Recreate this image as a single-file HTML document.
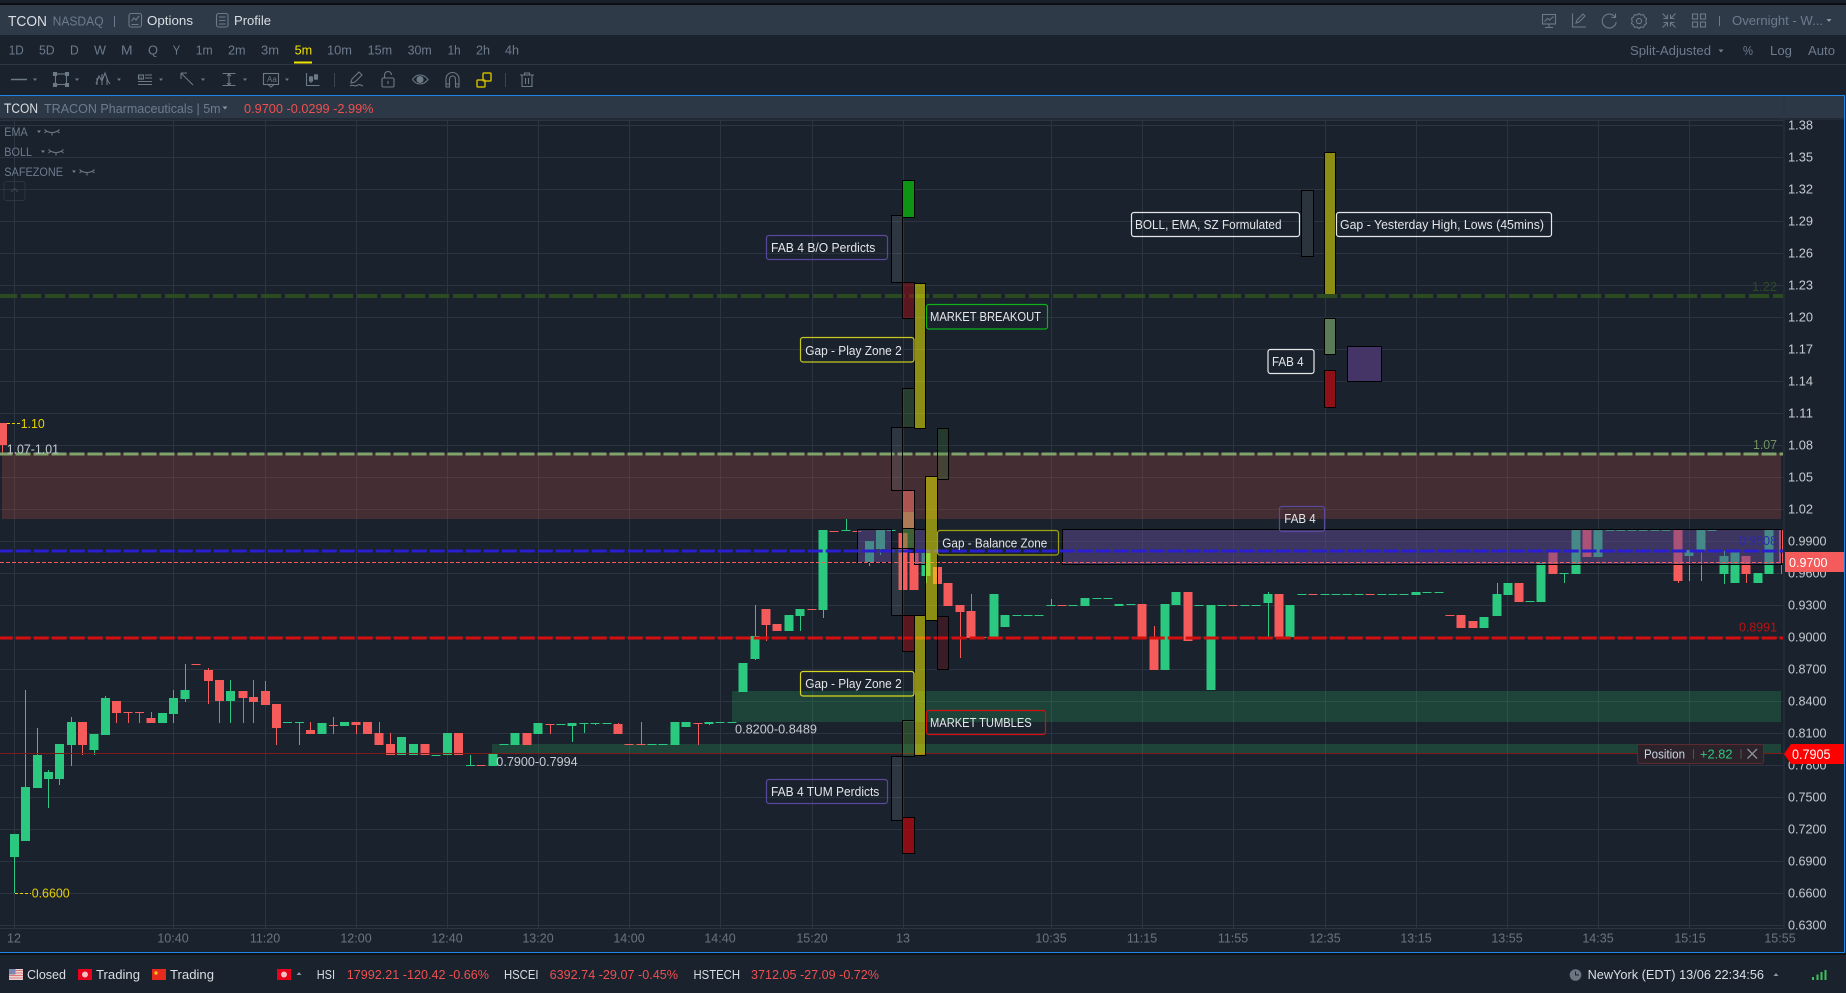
<!DOCTYPE html>
<html><head><meta charset="utf-8"><title>TCON</title>
<style>
html,body{margin:0;padding:0;background:#1a222d;width:1846px;height:993px;overflow:hidden}
svg{display:block}
text{font-family:"Liberation Sans","Noto Sans CJK SC",sans-serif;font-size:12.5px;fill:#c9ced4}
.m{fill:#6c7b8d}.w{fill:#d9dee3}.a{fill:#6a7480}.p{fill:#c6cbd1}.r{fill:#ef5050}.l{fill:#e4e6e9}
.y{fill:#e6d000}
.ic{fill:none;stroke:#6c7986;stroke-width:1.1}
.lb{fill:none;stroke-width:1.2}
.ov{stroke:#000;stroke-width:1}
</style></head><body>
<svg xmlns="http://www.w3.org/2000/svg" width="1846" height="993" viewBox="0 0 1846 993">
<rect width="1846" height="993" fill="#1a222d"/>
<rect width="1846" height="3" fill="#1a2029"/><rect y="3" width="1846" height="2" fill="#0b0e12"/>
<rect y="5" width="1846" height="30" fill="#2f3a49"/>
<rect y="64" width="1846" height="1" fill="#2e3843"/>
<rect y="96" width="1844" height="22" fill="#2d3846"/>
<rect y="118" width="1844" height="2" fill="#222a35"/>

<!-- top bar -->
<text x="8" y="26" style="font-size:15px" fill="#e8ebee" class="w" textLength="39" lengthAdjust="spacingAndGlyphs">TCON</text>
<text x="52.6" y="25.5" class="m" style="font-size:13px" textLength="51" lengthAdjust="spacingAndGlyphs">NASDAQ</text>
<rect x="114" y="16" width="1" height="11" fill="#6c7b8d"/>
<g class="ic"><rect x="129" y="13.5" width="12.5" height="13.5" rx="2"/><path d="M131.5 21l2.5-3 2 2 3-4M131.5 24.5h7"/></g>
<text x="147" y="25" class="w" style="font-size:13px" textLength="46" lengthAdjust="spacingAndGlyphs">Options</text>
<g class="ic"><rect x="216.500" y="13.500" width="11.500" height="13.500" rx="2"/><path d="M219 17h6.500M219 20.500h6.500M219 24h6.500"/></g>
<text x="234" y="25" class="w" style="font-size:13px" textLength="37" lengthAdjust="spacingAndGlyphs">Profile</text>

<g class="ic">
<rect x="1542.500" y="14.500" width="13" height="9.500"/><path d="M1549 24v3M1545 27.500h8M1544.500 21.500l3-3 2 1.500 4-3.500"/>
<path d="M1572.500 13.500v13.500h13.500M1576 23l1-3 6-6 2 2-6 6z"/>
<path d="M1615 17a7 7 0 1 0 1.200 5M1615.500 13.500v4h-4" />
<circle cx="1639" cy="21" r="2.600"/><path d="M1639 13.500l2 1.500 2.500-.3 1 2.300 2 1.500-.7 2.500.7 2.500-2 1.500-1 2.300-2.500-.3-2 1.500-2-1.500-2.500.3-1-2.300-2-1.500.7-2.500-.7-2.500 2-1.500 1-2.300 2.500.3z"/>
<path d="M1662.500 13.500l5 5M1667.500 14.500v4h-4M1675.500 13.500l-5 5M1670.500 14.500v4h4M1662.500 27.500l5-5M1667.500 26.500v-4h-4M1675.500 27.500l-5-5M1670.500 26.500v-4h4"/>
<rect x="1692.500" y="14" width="5" height="5"/><rect x="1700.500" y="14" width="5" height="5"/><rect x="1692.500" y="22" width="5" height="5"/><rect x="1700.500" y="22" width="5" height="5"/>
</g>
<rect x="1719" y="16" width="1" height="10" fill="#6c7b8d"/>
<text x="1732" y="25" class="m" textLength="91" lengthAdjust="spacingAndGlyphs">Overnight - W...</text>
<path d="M1826.500 19h5l-2.500 3z" fill="#8a96a3"/>

<!-- timeframe -->
<g class="m">
<text class="m" x="8.700" y="54.500" textLength="15" lengthAdjust="spacingAndGlyphs">1D</text>
<text class="m" x="39" y="54.500" textLength="15.600" lengthAdjust="spacingAndGlyphs">5D</text>
<text class="m" x="70" y="54.500" textLength="8.700" lengthAdjust="spacingAndGlyphs">D</text>
<text class="m" x="94" y="54.500" textLength="12" lengthAdjust="spacingAndGlyphs">W</text>
<text class="m" x="121" y="54.500" textLength="11.500" lengthAdjust="spacingAndGlyphs">M</text>
<text class="m" x="148" y="54.500" textLength="10" lengthAdjust="spacingAndGlyphs">Q</text>
<text class="m" x="172.800" y="54.500" textLength="7.500" lengthAdjust="spacingAndGlyphs">Y</text>
<text class="m" x="195.700" y="54.500" textLength="17" lengthAdjust="spacingAndGlyphs">1m</text>
<text class="m" x="228" y="54.500" textLength="17.600" lengthAdjust="spacingAndGlyphs">2m</text>
<text class="m" x="261" y="54.500" textLength="18" lengthAdjust="spacingAndGlyphs">3m</text>
<text style="fill:#f2e400" x="294.600" y="54.500" textLength="17.500" lengthAdjust="spacingAndGlyphs">5m</text>
<text class="m" x="327" y="54.500" textLength="25" lengthAdjust="spacingAndGlyphs">10m</text>
<text class="m" x="367.600" y="54.500" textLength="24.500" lengthAdjust="spacingAndGlyphs">15m</text>
<text class="m" x="407.600" y="54.500" textLength="24.200" lengthAdjust="spacingAndGlyphs">30m</text>
<text class="m" x="447.600" y="54.500" textLength="13" lengthAdjust="spacingAndGlyphs">1h</text>
<text class="m" x="476" y="54.500" textLength="14" lengthAdjust="spacingAndGlyphs">2h</text>
<text class="m" x="505" y="54.500" textLength="14" lengthAdjust="spacingAndGlyphs">4h</text>
</g>
<rect x="294" y="61.500" width="18" height="2" fill="#f2e400"/>
<text class="m" x="1630" y="55" textLength="81" lengthAdjust="spacingAndGlyphs">Split-Adjusted</text>
<path d="M1718.500 49.500h5l-2.500 3z" fill="#76838f"/>
<text class="m" x="1743" y="55" textLength="10" lengthAdjust="spacingAndGlyphs">%</text>
<text class="m" x="1770" y="55" textLength="22" lengthAdjust="spacingAndGlyphs">Log</text>
<text class="m" x="1808" y="55" textLength="27" lengthAdjust="spacingAndGlyphs">Auto</text>

<!-- drawing toolbar -->
<g fill="#6c7986">
<path d="M33 78.500h4l-2 2.500zM75 78.500h4l-2 2.500zM117 78.500h4l-2 2.500zM159 78.500h4l-2 2.500zM201 78.500h4l-2 2.500zM243 78.500h4l-2 2.500zM285 78.500h4l-2 2.500z"/>
<rect x="334" y="73" width="1" height="14" fill="#3a4552"/><rect x="505" y="73" width="1" height="14" fill="#3a4552"/>
</g>
<g class="ic">
<path d="M11 79.500h16" stroke-width="1.500"/>
<rect x="55.500" y="74" width="11" height="10.500"/><path d="M53.500 72.500h3v3h-3zM65.500 72.500h3v3h-3zM53.500 83.500h3v3h-3zM65.500 83.500h3v3h-3z" fill="#6c7986"/>
<path d="M96 84l3-8 3 5 3-8 3 8 2 3M97 78v7M102 74v11M107 78v7" />
<rect x="138.500" y="75" width="5" height="4"/><path d="M145 75h7M145 78h7M138 81.500h14M138 84.500h14" />
<path d="M181 73l12 12M181 73h6M181 73v6"/>
<path d="M222.500 73.500h13M222.500 85.500h13M229 74v11M227 76l2-2 2 2M227 83l2 2 2-2"/>
<rect x="263.500" y="73.500" width="15" height="11"/><path d="M268 84.500l3 2.500 3-2.500"/>
<path d="M306.500 73v12.500h13M311 76v7M316 74v6"/><rect x="309.500" y="77" width="3" height="4" fill="#6c7986"/><rect x="314.500" y="75" width="3" height="4" fill="#6c7986"/>
<path d="M351 82l1-3 7-7 3 3-7 7-4 1zM350 86c3-2 5 1 7-.5s4-.5 6 .5"/>
<rect x="382" y="78" width="12" height="9" rx="1.500"/><path d="M384.500 78v-3a3.500 3.500 0 0 1 7 0M388 81v3"/>
<path d="M412.500 79.500c4-6 11-6 15.500 0c-4.500 6-11.500 6-15.500 0z"/><circle cx="420" cy="79.500" r="3" fill="#6c7986"/>
<path d="M446 87v-8a6.500 6.500 0 0 1 13 0v8h-3.500v-8a3 3 0 0 0-6 0v8zM446 84h3.500M456 84h3"/>
<path d="M520 75h14M524.500 75v-2h5v2M522 75v11.500h10V75M525.500 78v6M528.500 78v6"/>
</g>
<text x="267" y="82" style="font-size:8px;fill:#6c7986">Aa</text>
<text x="139" y="78.500" style="font-size:4px;fill:#6c7986">G</text>
<g fill="none" stroke="#c9b800" stroke-width="1.500"><rect x="483" y="73" width="8" height="8" rx="1"/><rect x="477" y="80" width="8" height="7" rx="1"/></g>

<!-- legend -->
<text x="4" y="113" class="w" style="font-size:13.500px" textLength="34" lengthAdjust="spacingAndGlyphs">TCON</text>
<text x="44" y="113" class="m" style="font-size:13px" textLength="176.600" lengthAdjust="spacingAndGlyphs">TRACON Pharmaceuticals | 5m</text>
<path d="M222.500 106.500h5l-2.500 3z" fill="#8a96a3"/>
<text x="244" y="113" class="r" style="font-size:13px" textLength="129.500" lengthAdjust="spacingAndGlyphs">0.9700 -0.0299 -2.99%</text>

<!-- grid -->
<path stroke="#2b3440" stroke-width="1" fill="none" shape-rendering="crispEdges" d="M0 120.500H1783M0 125.500H1783M0 157.500H1783M0 189.500H1783M0 221.500H1783M0 253.500H1783M0 285.500H1783M0 317.500H1783M0 349.500H1783M0 381.500H1783M0 413.500H1783M0 445.500H1783M0 477.500H1783M0 509.500H1783M0 541.500H1783M0 573.500H1783M0 605.500H1783M0 637.500H1783M0 669.500H1783M0 701.500H1783M0 733.500H1783M0 765.500H1783M0 797.500H1783M0 829.500H1783M0 861.500H1783M0 893.500H1783M0 925.500H1783M0 928.500H1783
M14.500 120V928M173.500 120V928M265.500 120V928M356.500 120V928M447.500 120V928M538.500 120V928M629.500 120V928M720.500 120V928M812.500 120V928M903.500 120V928M1051.500 120V928M1142.500 120V928M1233.500 120V928M1325.500 120V928M1416.500 120V928M1507.500 120V928M1598.500 120V928M1689.500 120V928"/>
<rect x="1783.500" y="96" width="1" height="833" fill="#2b3440"/>

<!-- legend rows over grid -->
<text x="4.300" y="136" class="m" style="font-size:12px" textLength="23.400" lengthAdjust="spacingAndGlyphs">EMA</text>
<path d="M37 130.500h4l-2 2.500z" fill="#76838f"/>
<path class="ic" d="M44.500 129.500c4 4 11 4 15 0M47 131l-2.500 2M52 133v2.500M57 131l2.500 2" />
<text x="4.300" y="156" class="m" style="font-size:12px" textLength="27.700" lengthAdjust="spacingAndGlyphs">BOLL</text>
<path d="M41 150.500h4l-2 2.500z" fill="#76838f"/>
<path class="ic" d="M48.500 149.500c4 4 11 4 15 0M51 151l-2.500 2M56 153v2.500M61 151l2.500 2" />
<text x="4.300" y="176" class="m" style="font-size:12px" textLength="58.700" lengthAdjust="spacingAndGlyphs">SAFEZONE</text>
<path d="M72 170.500h4l-2 2.500z" fill="#76838f"/>
<path class="ic" d="M79.500 169.500c4 4 11 4 15 0M82 171l-2.500 2M87 173v2.500M92 171l2.500 2" />
<rect x="4" y="181.500" width="21" height="19" rx="2.500" fill="none" stroke="#2c3540"/>
<path d="M11 192l3.500-3.500 3.500 3.500" fill="none" stroke="#3c4753"/>

<!-- zones -->
<rect x="2" y="453" width="1779" height="66" fill="rgb(190,80,70)" fill-opacity=".26"/>
<rect x="732" y="691" width="1049" height="31" fill="rgb(45,170,95)" fill-opacity=".25"/>
<rect x="492" y="744" width="1289" height="9" fill="rgb(45,170,95)" fill-opacity=".25"/>

<!-- candles -->
<g shape-rendering="crispEdges" fill="none">
<path stroke="#2ac97f" stroke-width="1" d="M14.500 857V893M25.500 690V787M37.500 728V755M48.500 770V808M59.500 779V785M71.500 717V766M94.500 750V755M105.500 696V698M173.500 690V723M185.500 664V702M230.500 680V723M299.500 722V745M470.500 755V765M572.500 726V742M584.500 723V733M595.500 723V725M709.500 724V725M755.500 605V660M800.500 616V631M823.500 610V618M846.500 519V530M869.500 562V566M880.500 549V555M926.500 576V583M1051.500 599V605M1268.500 592V637M1497.500 583V616M1564.500 573V583M1689.500 556V581M1701.500 550V581M1724.500 551V584"/>
<path stroke="#f55b5b" stroke-width="1" d="M82.500 745V755M116.500 713V723M128.500 713V723M139.500 713V723M151.500 712V718M208.500 668V704M219.500 701V723M243.500 698V723M253.500 680V723M265.500 681V691M276.500 728V745M310.500 722V730M333.500 717V734M356.500 725V734M379.500 722V733M390.500 733V744M550.500 725V734M618.500 723V724M641.500 722V744M698.500 724V745M766.500 625V641M960.500 612V658M971.500 594V611M1154.500 626V638M1678.500 581V583M1746.500 574V583M1781.500 563V574M2.500 445V455"/>
<path stroke="#2ac97f" stroke-width="9" d="M14.500 834V857M25.500 787V841M37.500 755V788M48.500 772V779M59.500 744V779M71.500 722V745M94 734V750M105.500 698V735M162.500 713V723M173.500 698V714M185 690V699M230.500 691V701M322 723V734M344.500 722V726M401.500 737V755M413.500 744V755M447.500 733V755M493 754V766M515 733V745M538 723V734M572 723V726M675 722V745M686 722V727M709 722V724M743 663V692M755 636V659M789 615V631M800 609V616M823 530V610M869.500 541V562M880.500 530V549M926 553V576M994 594V637M1005 615V627M1085 598V606M1119 604V606M1165 604V670M1176 592V605M1211 605V690M1268 594V603M1290 605V637M1416 592V595M1484 617V628M1497 594V616M1508 583V595M1541 563V602M1576 530V574M1598 530V557M1689 550V556M1701 530V550M1724 556V574M1735 552V583M1758 573V583M1769 530V574
M287.500 722V723M299.500 722V723M436 755V756M470.500 765V766M504 744V745M561 724V725M584 723V724M595 723V724M607 723V724M652 744V745M663 744V745M720 722V723M732 722V723M846 530V531M891 530V531M982 637V638M1017 615V616M1028 615V616M1039 615V616M1051 605V606M1073 605V606M1097 598V599M1108 598V599M1131 604V605M1199 605V606M1222 605V606M1245 605V606M1256 605V606M1302 594V595M1325 594V595M1336 594V595M1347 594V595M1359 594V595M1382 594V595M1393 594V595M1404 594V595M1427 592V593M1439 592V593M1530 601V602M1564 573V574M1610 530V531M1621 530V531M1632 530V531M1643 530V531M1655 530V531M1666 530V531M1712 530V531"/>
<path stroke="#f55b5b" stroke-width="9" d="M82.500 722V745M116.500 701V713M151 718V723M208.500 670V681M219.500 680V701M243 691V698M253.500 697V702M265.500 691V705M276.500 704V728M310.500 730V734M356 722V725M367.500 722V734M379 733V745M390.500 744V755M425 744V755M458.500 733V755M527 733V745M618 724V734M766 609V625M777 624V631M903 533V590M914 553V590M937.500 567V584M948 583V606M960 605V612M971 611V638M1142 604V638M1154 638V670M1188 592V641M1279 594V637M1461 615V628M1473 621V628M1519 583V602M1553 552V574M1587 530V557M1678 530V581M1746 556V574
M128 712V713M139.500 712V713M196 664V665M333.500 725V726M481 765V766M550 724V725M629 744V745M641 744V745M698 723V724M812 609V610M834 531V532M857 531V532M1062 605V606M1233 605V606M1313 594V595M1370 594V595M1450 615V616"/>
<path stroke="#f55b5b" stroke-width="7" d="M3.500 423V445"/>
<path stroke="#f55b5b" stroke-width="4" d="M1781 530V563"/>
</g>

<!-- purple boxes -->
<g class="ov" fill="rgb(95,73,148)" fill-opacity=".5">
<rect x="857.500" y="529.500" width="34" height="33"/>
<rect x="914.500" y="529.500" width="11" height="35"/>
<rect x="1062.500" y="529.500" width="719" height="35"/>
</g>

<!-- dashed lines -->
<g fill="none" shape-rendering="crispEdges">
<path d="M-3 296H1783" stroke="#2b4a1f" stroke-width="4" stroke-dasharray="20 4"/>
<path d="M-2.300 454H1783" stroke="#7fa36a" stroke-width="3" stroke-dasharray="15 3"/>
<path d="M0 562.500H1783" stroke="#f55b5b" stroke-width="1" stroke-dasharray="4 2"/>
<path d="M0 753.500H1783" stroke="#7e1a1a" stroke-width="1"/>
</g>
<g fill="none">
<path d="M-2.300 551H1783" stroke="#2a1fd0" stroke-width="3" stroke-dasharray="15 3"/>
<path d="M-2.300 638H1783" stroke="#d40f0f" stroke-width="3" stroke-dasharray="15 3"/>
</g>

<!-- vertical overlays -->
<g class="ov">
<rect x="902.500" y="180.500" width="12" height="37" fill="#0d9414"/>
<rect x="891.500" y="215.500" width="11" height="67" fill="rgb(130,138,144)" fill-opacity=".2"/>
<rect x="902.500" y="282.500" width="12" height="36" fill="rgb(190,5,10)" fill-opacity=".4"/>
<rect x="902.500" y="388.500" width="12" height="39" fill="rgb(70,130,50)" fill-opacity=".3"/>
<rect x="891.500" y="427.500" width="11" height="63" fill="rgb(130,138,144)" fill-opacity=".2"/>
<rect x="891.500" y="548.500" width="11" height="67" fill="rgb(130,138,144)" fill-opacity=".2"/>
<rect x="902.500" y="490.500" width="12" height="38" fill="rgb(240,110,100)" fill-opacity=".6"/>
<rect x="903" y="512" width="11" height="16" fill="#ae7a55" stroke="none"/>
<rect x="902.500" y="528.500" width="12" height="20" fill="rgb(90,150,60)" fill-opacity=".55"/>
<rect x="902.500" y="615.500" width="12" height="36" fill="rgb(190,5,10)" fill-opacity=".4"/>
<rect x="902.500" y="720.500" width="12" height="36" fill="rgb(70,130,50)" fill-opacity=".4"/>
<rect x="891.500" y="756.500" width="11" height="64" fill="rgb(130,138,144)" fill-opacity=".2"/>
<rect x="902.500" y="817.500" width="12" height="36" fill="rgb(190,5,10)" fill-opacity=".7"/>
<rect x="914.500" y="283.500" width="11" height="145" fill="rgb(234,229,0)" fill-opacity=".55"/>
<rect x="914.500" y="615.500" width="11" height="140" fill="rgb(234,229,0)" fill-opacity=".55"/>
<rect x="925.500" y="476.500" width="12" height="144" fill="rgb(234,229,0)" fill-opacity=".55"/>
<rect x="937.500" y="428.500" width="11" height="51" fill="rgb(70,130,50)" fill-opacity=".25"/>
<rect x="937.500" y="616.500" width="11" height="53" fill="rgb(190,5,10)" fill-opacity=".2"/>
<rect x="1301.500" y="190.500" width="12" height="66" fill="#2b333d"/>
<rect x="1324.500" y="152.500" width="11" height="144" fill="#8c8d14"/>
<rect x="1324.500" y="318.500" width="11" height="36" fill="#5b7a58"/>
<rect x="1324.500" y="370.500" width="11" height="37" fill="#8f1117"/>
<rect x="1347.500" y="346.500" width="34" height="35" fill="#443566"/>
</g>
<path d="M1324 296h12" stroke="#2b4a1f" stroke-width="4" fill="none"/>

<!-- annotation labels -->
<g class="lb">
<rect x="1131.500" y="212.500" width="168" height="24" rx="2.500" stroke="#e8e8e8"/>
<rect x="1336.500" y="212.500" width="215" height="24" rx="2.500" stroke="#e8e8e8"/>
<rect x="1268" y="349.500" width="46" height="24" rx="2.500" stroke="#e8e8e8"/>
<rect x="766.500" y="235.500" width="121" height="24" rx="2.500" stroke="#59489a"/>
<rect x="926.500" y="304.500" width="121" height="24.500" rx="2.500" stroke="#0fb01a"/>
<rect x="800.500" y="337.500" width="113.500" height="24.500" rx="2.500" stroke="#c8c81e"/>
<rect x="937.500" y="530.500" width="121" height="24.500" rx="2.500" stroke="#a0a012"/>
<rect x="800.500" y="671.500" width="113.500" height="24.500" rx="2.500" stroke="#d8d820"/>
<rect x="926.500" y="710.500" width="119" height="24" rx="2.500" stroke="#d01010"/>
<rect x="766.500" y="779.500" width="121" height="24" rx="2.500" stroke="#59489a"/>
<rect x="1279.500" y="506.500" width="45" height="25" rx="2.500" stroke="#59489a"/>
</g>
<g>
<text class="l" x="1135" y="229" textLength="146.500" lengthAdjust="spacingAndGlyphs">BOLL, EMA, SZ Formulated</text>
<text class="l" x="1340" y="229" textLength="204" lengthAdjust="spacingAndGlyphs">Gap - Yesterday High, Lows (45mins)</text>
<text class="l" x="1272" y="366" textLength="31.500" lengthAdjust="spacingAndGlyphs">FAB 4</text>
<text class="l" x="771" y="252" textLength="104.300" lengthAdjust="spacingAndGlyphs">FAB 4 B/O Perdicts</text>
<text class="l" x="930" y="321" textLength="111" lengthAdjust="spacingAndGlyphs">MARKET BREAKOUT</text>
<text class="l" x="805.300" y="355" textLength="96.400" lengthAdjust="spacingAndGlyphs">Gap - Play Zone 2</text>
<text class="l" x="942.300" y="547.500" textLength="105" lengthAdjust="spacingAndGlyphs">Gap - Balance Zone</text>
<text class="l" x="805.300" y="688" textLength="96.400" lengthAdjust="spacingAndGlyphs">Gap - Play Zone 2</text>
<text class="l" x="930" y="727" textLength="101.700" lengthAdjust="spacingAndGlyphs">MARKET TUMBLES</text>
<text class="l" x="771" y="796" textLength="108.300" lengthAdjust="spacingAndGlyphs">FAB 4 TUM Perdicts</text>
<text class="l" x="1284.300" y="523" textLength="31.400" lengthAdjust="spacingAndGlyphs">FAB 4</text>
<text class="p" x="735" y="733.500" textLength="82" lengthAdjust="spacingAndGlyphs">0.8200-0.8489</text>
<text class="p" x="496.300" y="766" textLength="81.400" lengthAdjust="spacingAndGlyphs">0.7900-0.7994</text>
<text class="p" x="6.700" y="453.500" textLength="52.300" lengthAdjust="spacingAndGlyphs">1.07-1.01</text>
<text class="y" x="20.700" y="428" textLength="24" lengthAdjust="spacingAndGlyphs">1.10</text>
<text class="y" x="31.700" y="897.500" textLength="38" lengthAdjust="spacingAndGlyphs">0.6600</text>
</g>
<path d="M7 423.500h13M15 893.500h16" stroke="#e6d000" stroke-width="1" stroke-dasharray="3 2" fill="none"/>
<text x="1752" y="291" style="fill:#2f4a26" textLength="25" lengthAdjust="spacingAndGlyphs">1.22</text>
<text x="1753" y="449" style="fill:#6f9160" textLength="24" lengthAdjust="spacingAndGlyphs">1.07</text>
<text x="1739" y="545" style="fill:#2f2aa8" textLength="38" lengthAdjust="spacingAndGlyphs">0.9808</text>
<text x="1739" y="631.500" style="fill:#b51414" textLength="38" lengthAdjust="spacingAndGlyphs">0.8991</text>

<!-- price axis -->
<g>
<text class="p" x="1788" y="129.500" textLength="25" lengthAdjust="spacingAndGlyphs">1.38</text>
<text class="p" x="1788" y="161.500" textLength="25" lengthAdjust="spacingAndGlyphs">1.35</text>
<text class="p" x="1788" y="193.500" textLength="25" lengthAdjust="spacingAndGlyphs">1.32</text>
<text class="p" x="1788" y="225.500" textLength="25" lengthAdjust="spacingAndGlyphs">1.29</text>
<text class="p" x="1788" y="257.500" textLength="25" lengthAdjust="spacingAndGlyphs">1.26</text>
<text class="p" x="1788" y="289.500" textLength="25" lengthAdjust="spacingAndGlyphs">1.23</text>
<text class="p" x="1788" y="321.500" textLength="25" lengthAdjust="spacingAndGlyphs">1.20</text>
<text class="p" x="1788" y="353.500" textLength="25" lengthAdjust="spacingAndGlyphs">1.17</text>
<text class="p" x="1788" y="385.500" textLength="25" lengthAdjust="spacingAndGlyphs">1.14</text>
<text class="p" x="1788" y="417.500" textLength="25" lengthAdjust="spacingAndGlyphs">1.11</text>
<text class="p" x="1788" y="449.500" textLength="25" lengthAdjust="spacingAndGlyphs">1.08</text>
<text class="p" x="1788" y="481.500" textLength="25" lengthAdjust="spacingAndGlyphs">1.05</text>
<text class="p" x="1788" y="513.500" textLength="25" lengthAdjust="spacingAndGlyphs">1.02</text>
<text class="p" x="1788" y="545.500" textLength="38.500" lengthAdjust="spacingAndGlyphs">0.9900</text>
<text class="p" x="1788" y="577.500" textLength="38.500" lengthAdjust="spacingAndGlyphs">0.9600</text>
<text class="p" x="1788" y="609.500" textLength="38.500" lengthAdjust="spacingAndGlyphs">0.9300</text>
<text class="p" x="1788" y="641.500" textLength="38.500" lengthAdjust="spacingAndGlyphs">0.9000</text>
<text class="p" x="1788" y="673.500" textLength="38.500" lengthAdjust="spacingAndGlyphs">0.8700</text>
<text class="p" x="1788" y="705.500" textLength="38.500" lengthAdjust="spacingAndGlyphs">0.8400</text>
<text class="p" x="1788" y="737.500" textLength="38.500" lengthAdjust="spacingAndGlyphs">0.8100</text>
<text class="p" x="1788" y="769.500" textLength="38.500" lengthAdjust="spacingAndGlyphs">0.7800</text>
<text class="p" x="1788" y="801.500" textLength="38.500" lengthAdjust="spacingAndGlyphs">0.7500</text>
<text class="p" x="1788" y="833.500" textLength="38.500" lengthAdjust="spacingAndGlyphs">0.7200</text>
<text class="p" x="1788" y="865.500" textLength="38.500" lengthAdjust="spacingAndGlyphs">0.6900</text>
<text class="p" x="1788" y="897.500" textLength="38.500" lengthAdjust="spacingAndGlyphs">0.6600</text>
<text class="p" x="1788" y="929.500" textLength="38.500" lengthAdjust="spacingAndGlyphs">0.6300</text>
</g>
<rect x="1785" y="552" width="59" height="20" fill="#f55b5b"/>
<text x="1789" y="567" style="fill:#fff" textLength="38.500" lengthAdjust="spacingAndGlyphs">0.9700</text>
<path d="M1784 754l7-10h53v20h-53z" fill="#ff0000"/>
<text x="1792" y="759" style="fill:#fff;font-size:13.500px" textLength="38.500" lengthAdjust="spacingAndGlyphs">0.7905</text>
<rect x="1637.500" y="744.500" width="126" height="19" rx="2" fill="#2b222a" stroke="#5c2a30"/>
<text x="1644" y="758.500" style="fill:#c9d6e2" textLength="41" lengthAdjust="spacingAndGlyphs">Position</text>
<rect x="1693" y="749" width="1" height="10" fill="#55505a"/>
<text x="1700" y="758.500" style="fill:#2ac97f" textLength="32.600" lengthAdjust="spacingAndGlyphs">+2.82</text>
<rect x="1740.500" y="749" width="1" height="10" fill="#55505a"/>
<path d="M1747.500 749l9.500 9.500M1757 749l-9.500 9.500" stroke="#8a939c" stroke-width="1.300" fill="none"/>

<!-- time axis -->
<g text-anchor="middle">
<text class="a" x="14" y="942.500" text-anchor="middle">12</text>
<text class="a" x="173" y="942.500" text-anchor="middle">10:40</text>
<text class="a" x="265" y="942.500" text-anchor="middle">11:20</text>
<text class="a" x="356" y="942.500" text-anchor="middle">12:00</text>
<text class="a" x="447" y="942.500" text-anchor="middle">12:40</text>
<text class="a" x="538" y="942.500" text-anchor="middle">13:20</text>
<text class="a" x="629" y="942.500" text-anchor="middle">14:00</text>
<text class="a" x="720" y="942.500" text-anchor="middle">14:40</text>
<text class="a" x="812" y="942.500" text-anchor="middle">15:20</text>
<text class="a" x="903" y="942.500" text-anchor="middle">13</text>
<text class="a" x="1051" y="942.500" text-anchor="middle">10:35</text>
<text class="a" x="1142" y="942.500" text-anchor="middle">11:15</text>
<text class="a" x="1233" y="942.500" text-anchor="middle">11:55</text>
<text class="a" x="1325" y="942.500" text-anchor="middle">12:35</text>
<text class="a" x="1416" y="942.500" text-anchor="middle">13:15</text>
<text class="a" x="1507" y="942.500" text-anchor="middle">13:55</text>
<text class="a" x="1598" y="942.500" text-anchor="middle">14:35</text>
<text class="a" x="1690" y="942.500" text-anchor="middle">15:15</text>
<text class="a" x="1780" y="942.500" text-anchor="middle">15:55</text>
</g>

<!-- blue frame -->
<path d="M0 95.500H1844.500V952.500H0" fill="none" stroke="#1e86e8" stroke-width="1"/>
<rect y="953" width="1846" height="2" fill="#0f1419"/>

<!-- status bar -->
<rect x="9" y="969" width="14" height="11" fill="#e8d5d5"/><path d="M9 970.500h14M9 973h14M9 975.500h14M9 978h14" stroke="#e07a7a" stroke-width="1"/><rect x="9" y="969" width="6.500" height="5.500" fill="#7d86b0"/>
<text x="27" y="979" class="w" style="font-size:13px" textLength="39" lengthAdjust="spacingAndGlyphs">Closed</text>
<rect x="78" y="969" width="14" height="11" fill="#e8001c"/><circle cx="85" cy="974.500" r="3" fill="#f5c0c0"/>
<text x="96" y="979" class="w" style="font-size:13px" textLength="44" lengthAdjust="spacingAndGlyphs">Trading</text>
<rect x="152" y="969" width="14" height="11" fill="#e62a1c"/><circle cx="156" cy="973" r="1.700" fill="#f0c020"/>
<text x="170" y="979" class="w" style="font-size:13px" textLength="44" lengthAdjust="spacingAndGlyphs">Trading</text>
<rect x="277" y="969" width="14" height="11" fill="#e8001c"/><circle cx="284" cy="974.500" r="3" fill="#f5c0c0"/>
<path d="M296.500 975h5l-2.500-3z" fill="#8a96a3"/>
<text x="316.700" y="979" class="w" style="font-size:13px" textLength="18.300" lengthAdjust="spacingAndGlyphs">HSI</text>
<text x="346.700" y="979" class="r" style="font-size:13px" textLength="142.300" lengthAdjust="spacingAndGlyphs">17992.21 -120.42 -0.66%</text>
<text x="504" y="979" class="w" style="font-size:13px" textLength="34.500" lengthAdjust="spacingAndGlyphs">HSCEI</text>
<text x="549.600" y="979" class="r" style="font-size:13px" textLength="128.400" lengthAdjust="spacingAndGlyphs">6392.74 -29.07 -0.45%</text>
<text x="693.500" y="979" class="w" style="font-size:13px" textLength="46.500" lengthAdjust="spacingAndGlyphs">HSTECH</text>
<text x="751" y="979" class="r" style="font-size:13px" textLength="128" lengthAdjust="spacingAndGlyphs">3712.05 -27.09 -0.72%</text>
<circle cx="1575.500" cy="975" r="5.800" fill="#6c7683"/><path d="M1575.500 971.500v3.500h3.500" stroke="#1a222d" stroke-width="1" fill="none"/>
<text x="1587.600" y="979" class="w" style="font-size:13px" textLength="176.400" lengthAdjust="spacingAndGlyphs">NewYork (EDT) 13/06 22:34:56</text>
<path d="M1773.500 976h5l-2.500-3z" fill="#8a96a3"/>
<g fill="#3ec15c"><rect x="1812" y="977" width="2" height="3"/><rect x="1816.500" y="974.500" width="2" height="5.500"/><rect x="1820.500" y="972" width="2" height="8"/><rect x="1824.500" y="970" width="2" height="10"/></g>
</svg>
</body></html>
